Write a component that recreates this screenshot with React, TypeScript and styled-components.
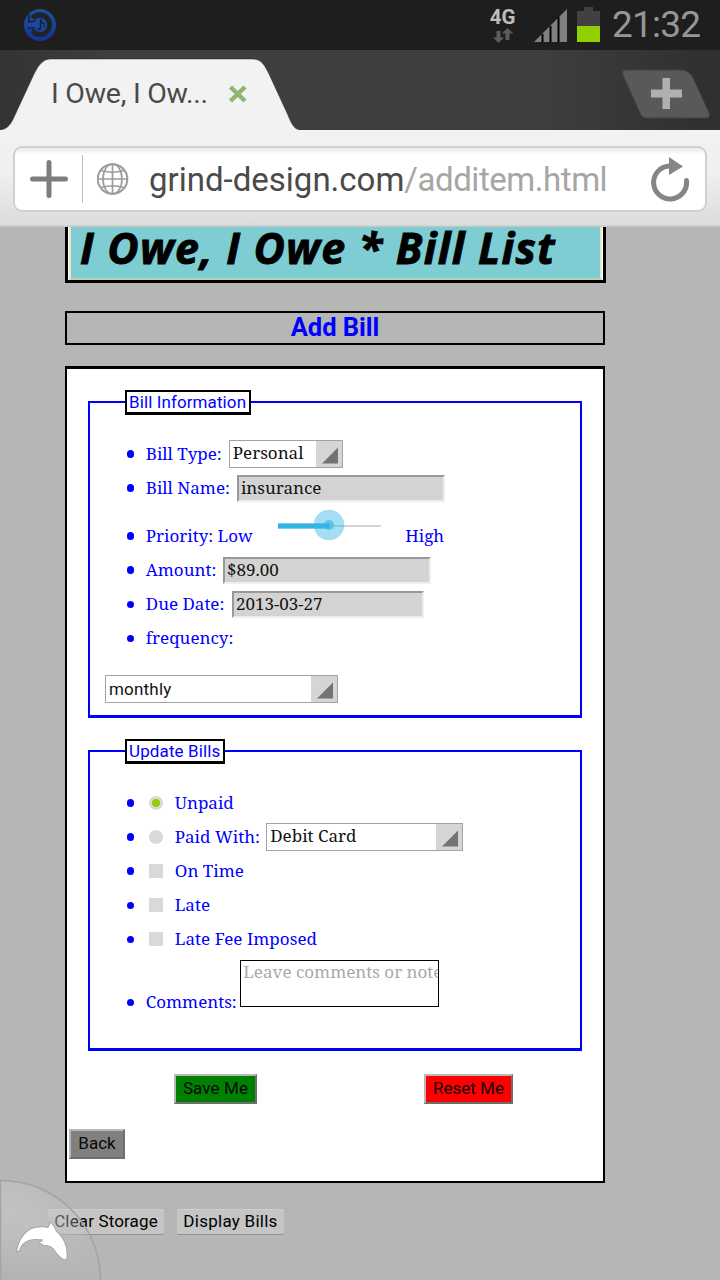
import React from 'react';
import styled, { createGlobalStyle } from 'styled-components';

const Global = createGlobalStyle`
  * { box-sizing: border-box; }
  body { margin: 0; background: #b6b6b4; }
`;

const sans = 'Roboto, "Liberation Sans", sans-serif';
const serif = '"Noto Serif", "DejaVu Serif Condensed", "DejaVu Serif", serif';

const Screen = styled.div`
  position: relative;
  width: 720px;
  height: 1280px;
  overflow: hidden;
  background: #b6b6b4;
  font-family: ${serif};
  font-size: 17px;
  color: #00f;
  white-space: nowrap;
`;

/* ---------- device status bar ---------- */

const StatusBar = styled.header`
  display: flex;
  height: 50px;
  padding: 0 20px 0 22px;
  background: #1e1e1e;
  font-family: ${sans};
`;

const StatusSpacer = styled.div`
  flex: 1;
`;

const Network = styled.div`
  display: flex;
  flex-direction: column;
  align-items: center;
  width: 28px;
  margin-right: 17px;
  padding-top: 7px;
  color: #bebebe;
  font-weight: 700;
  font-size: 20.5px;
  line-height: 21px;
`;

const Clock = styled.div`
  width: 88px;
  margin-left: 11.5px;
  color: #969696;
  font-size: 37px;
  line-height: 50px;
  letter-spacing: -0.8px;
`;

/* ---------- browser chrome ---------- */

const TabStrip = styled.div`
  display: flex;
  justify-content: space-between;
  height: 80px;
  background: linear-gradient(90deg, #333 0, #3e3e3e 110px, #3e3e3e 540px, #303030 700px);
`;

const Tab = styled.div`
  display: grid;
  width: 300px;
  height: 80px;
  > * { grid-area: 1 / 1; }
`;

const TabContent = styled.div`
  display: flex;
  align-items: center;
  padding: 7px 0 0 51px;
  gap: 18px;
  color: #4a4a4a;
  font: 28.5px/34px ${sans};
`;

const TabTitle = styled.span`
  width: 159px;
  letter-spacing: -0.25px;
`;

const NewTab = styled.svg`
  margin-top: 18px;
`;

const AddressArea = styled.div`
  height: 97px;
  padding: 16px 13px 0;
  background: linear-gradient(#f2f2f2 0, #efefef 45px, #dcdcdc 93px, #dcdcdc 95px, #bdbfbc 97px);
`;

const AddressBox = styled.div`
  display: flex;
  align-items: center;
  height: 66px;
  border: 2px solid #d0d0d0;
  border-radius: 9px;
  background: linear-gradient(#e9e9e9, #fff 7px);
  padding: 0 13px 0 15px;
`;

const Divider = styled.i`
  width: 1px;
  height: 48px;
  margin: 0 14px 0 14px;
  background: #b9c4b4;
`;

const Url = styled.div`
  flex: 1;
  margin: 2px 0 0 20px;
  color: #4a4a4a;
  font: 33px/40px ${sans};
`;

const Path = styled.span`
  color: #a6a6a6;
  letter-spacing: -0.45px;
`;

/* ---------- web page ---------- */

const Page = styled.main`
  display: flex;
  flex-direction: column;
  margin-left: 65px;
  width: 541px;
`;

const Banner = styled.h1`
  margin: 0;
  height: 56px;
  padding: 0 1px 0 1px;
  border: solid #000;
  border-width: 0 3px 3px;
  background: #fff;
`;

const BannerArt = styled.div`
  height: 53px;
  border: solid #ebe7c6;
  border-width: 0 2px 2px;
  border-bottom-color: #bcd0bb;
  background: #7dcdd2;
  padding-left: 9px;
  color: #000;
  font: italic 700 43px/41px "Open Sans", "Noto Sans", sans-serif;
  letter-spacing: 1.22px;
  -webkit-text-stroke: 0.9px #000;
`;

const Heading = styled.h2`
  width: 540px;
  height: 34px;
  margin: 28px 0 0;
  border: 2px solid #000;
  text-align: center;
  font: 700 25.5px/29px ${sans};
`;

const Form = styled.form`
  display: flex;
  flex-direction: column;
  width: 540px;
  height: 817px;
  margin: 21px 0 0;
  padding: 21px 21px 0;
  border: 2px solid #000;
  border-top-width: 3px;
  background: #fff;
`;

const Group = styled.fieldset<{ $h: number }>`
  height: ${p => p.$h}px;
  min-width: 0;
  margin: 0 0 21px;
  padding: 0 0 0 15px;
  border: 2px solid #00f;
  border-bottom-width: 3px;
`;

const Legend = styled.legend<{ $w: number; $track: number }>`
  width: ${p => p.$w}px;
  height: 24px;
  margin-left: 20px;
  padding-left: 2px;
  border: 2px solid #000;
  box-shadow: 0 1px 0 #000;
  font: 17px/20px ${sans};
  letter-spacing: ${p => p.$track}px;
`;

const List = styled.ul`
  margin: 22.4px 0 0;
  padding: 0 0 0 22px;
  list-style: none;
`;

const Item = styled.li<{ $h?: number }>`
  display: flex;
  align-items: flex-end;
  height: ${p => p.$h ?? 34.17}px;
  line-height: 34px;

  &::before {
    content: '';
    flex: none;
    width: 7.4px;
    height: 7.4px;
    margin: 0 11.4px 13px 0;
    border-radius: 50%;
    background: #00f;
  }
`;

const Label = styled.span<{ $w?: number; $track?: number }>`
  flex: none;
  height: 34px;
  width: ${p => (p.$w ? p.$w + 'px' : 'auto')};
  letter-spacing: ${p => p.$track ?? 0}px;
`;

const Select = styled.div<{ $w: number; $sans?: boolean }>`
  display: flex;
  flex: none;
  justify-content: space-between;
  width: ${p => p.$w}px;
  height: 28px;
  margin-bottom: 2.5px;
  padding-left: 3px;
  border: 1.5px solid #a3a3a3;
  background: #fff;
  color: #111;
  font: 17px/${p => (p.$sans ? '26px' : '24px')} ${p => (p.$sans ? sans : serif)};
  letter-spacing: ${p => (p.$sans ? 0.2 : 0)}px;
`;

const SelectArrow = styled.svg`
  flex: none;
  background: #d5d5d5;
`;

const Field = styled.div<{ $w: number }>`
  width: ${p => p.$w}px;
  height: 27px;
  margin-bottom: 3px;
  padding-left: 1.6px;
  border: 2px solid;
  border-color: #999 #eee #eee #999;
  background: #d3d3d3;
  color: #111;
  line-height: 21px;
`;

const Slider = styled.svg`
  margin: 0 20px 12px 20px;
`;

const Choice = styled.i<{ $round?: boolean; $on?: boolean }>`
  width: 14px;
  height: 14px;
  margin: 0 11.6px 10px 3.4px;
  border-radius: ${p => (p.$round ? '50%' : '0')};
  background: ${p => (p.$on ? 'radial-gradient(circle, #99cc00 3.7px, #d8d8d8 4.5px)' : '#d9d9d9')};
`;

const Comments = styled.div`
  width: 199px;
  height: 47px;
  margin-bottom: 12px;
  padding-left: 2px;
  border: 1px solid #000;
  overflow: hidden;
  color: #a9a9a9;
  line-height: 22px;
`;

const Actions = styled.div`
  display: flex;
  justify-content: space-between;
  padding: 2px 69px 0 86px;
`;

const Button = styled.button<{ $w: number; $bg: string; $track?: number }>`
  width: ${p => p.$w}px;
  height: 30px;
  padding: 0 0 2px;
  border: 2px solid;
  border-color: #b8b8b8 #6e6e6e #6e6e6e #b8b8b8;
  background: ${p => p.$bg};
  color: #080808;
  font: 17px/24px ${sans};
  letter-spacing: ${p => p.$track ?? 0}px;
  white-space: nowrap;
`;

const BackRow = styled.div`
  display: flex;
  margin: 25px 0 0 -19px;
`;

const Tools = styled.footer`
  display: flex;
  gap: 13px;
  margin: 26px 0 0 -17px;
`;

const ToolButton = styled.button<{ $w: number; $track: number }>`
  width: ${p => p.$w}px;
  height: 26px;
  padding: 0 0 2px;
  border: 0;
  border-top: 1px solid #cfcfcf;
  border-bottom: 1px solid #929292;
  border-radius: 2px;
  background: #c5c5c5;
  color: #000;
  font: 17px/22px ${sans};
  letter-spacing: ${p => p.$track}px;
  white-space: nowrap;
`;

const MonthlySlot = styled.div`
  margin-top: 19.6px;
`;

const Dolphin = styled.svg`
  position: absolute;
  left: 0;
  bottom: 0;
`;

const Dropdown = ({ w, value, sansText }: { w: number; value: string; sansText?: boolean }) => (
  <Select $w={w} $sans={sansText}>
    {value}
    <SelectArrow width="26" height="26" viewBox="0 0 26 26">
      <path d="M6 22.5L22 6.5V22.5Z" fill="#737373" />
    </SelectArrow>
  </Select>
);

export default function App() {
  return (
    <Screen>
      <Global />
      <StatusBar>
        <svg width="36" height="50" viewBox="0 0 36 50">
          <defs>
            <linearGradient id="ring" x1="0" y1="0" x2="0" y2="1">
              <stop offset="0" stopColor="#205098" />
              <stop offset="1" stopColor="#12349a" />
            </linearGradient>
          </defs>
          <circle cx="18" cy="25" r="16" fill="url(#ring)" />
          <path d="M9 17A11.500 11.500 0 1 1 9.500 32.500" fill="none" stroke="#1c2432" strokeWidth="1.5" />
          <path d="M11 18.500A9.500 9.500 0 1 1 11 31.500" fill="none" stroke="#202226" strokeWidth="4.500" />
          <path d="M6.500 14.500L7 22L14 21.500M6 28L13 27L10 31.500" fill="none" stroke="#1c2432" strokeWidth="1.800" />
          <circle cx="18.500" cy="25" r="6.500" fill="#1c479c" />
          <path d="M7 22.500H14V27H7Z" fill="#1c479c" />
          <path d="M18.500 29V19.500Q19.500 23 22 24Q22.500 26 21.500 27" fill="none" stroke="#181f30" strokeWidth="1.300" />
          <ellipse cx="17.300" cy="29" rx="1.800" ry="1.300" fill="#181f30" />
        </svg>
        <StatusSpacer />
        <Network>
          4G
          <svg width="22" height="16" viewBox="0 0 22 16">
            <path d="M4.500 3H8.500V9.500H12L6.500 15L1 9.500H4.500Z" fill="#5c5c5c" />
            <path d="M13.500 12H17.500V5.500H21.500L15.500 0L10 5.500H13.500Z" fill="#5c5c5c" />
          </svg>
        </Network>
        <svg width="34" height="50" viewBox="0 0 34 50">
          <path d="M0 42L33 9V42Z" fill="#808080" />
          <path d="M7.500 34H9.500V42H7.500ZM15.500 26H17.500V42H15.500ZM23.500 17H25.500V42H23.500Z" fill="#000" />
        </svg>
        <svg width="33" height="50" viewBox="0 0 33 50">
          <path d="M9 11H16V7H25V11H32V26H9Z" fill="#414141" />
          <path d="M9 26H32V42H9Z" fill="#91d000" />
        </svg>
        <Clock>21:32</Clock>
      </StatusBar>

      <TabStrip>
        <Tab>
          <svg width="300" height="80" viewBox="0 0 300 80">
            <path
              d="M0 80C8 79 11 74 15 65L34 24Q41 9 50 9H252C261 9 264 14 269 24L287 63C291 72 293 79 300 80"
              fill="#f2f2f2"
              stroke="#262626"
              strokeOpacity=".5"
              strokeWidth="1"
            />
          </svg>
          <TabContent>
            <TabTitle>I Owe, I Ow...</TabTitle>
            <svg width="20" height="20" viewBox="0 0 20 20">
              <path d="M2.500 3L17 17M17 3L2.500 17" stroke="#8fb573" strokeWidth="4.500" />
            </svg>
          </TabContent>
        </Tab>
        <NewTab width="100" height="52" viewBox="0 0 100 52">
          <path
            d="M6 2H60Q69 2 73 10L89 45Q91 50 86 50H27Q22 50 20 45L3 7Q1 2 6 2Z"
            fill="#595959"
            stroke="#42453e"
          />
          <path d="M42.500 10H50V21.500H62V29.500H50V41H42.500V29.500H31V21.500H42.500Z" fill="#b0b0b0" />
        </NewTab>
      </TabStrip>

      <AddressArea>
        <AddressBox>
          <svg width="38" height="38" viewBox="0 0 38 38">
            <path d="M19 2.500V35.500M2.500 19H35.500" stroke="#7d7d7d" strokeWidth="5" strokeLinecap="round" />
          </svg>
          <Divider />
          <svg width="32" height="32" viewBox="0 0 32 32" fill="none" stroke="#9c9c9c" strokeWidth="1.7">
            <circle cx="15.500" cy="16" r="14.800" strokeWidth="2" />
            <ellipse cx="15.500" cy="16" rx="9.500" ry="15" />
            <path d="M15.500 1V31M1 16H30M4 7.500Q15.500 11 27 7.500M4 24.500Q15.500 21 27 24.500" />
          </svg>
          <Url>
            grind-design.com<Path>/additem.html</Path>
          </Url>
          <svg width="42" height="46" viewBox="0 0 42 46">
            <path d="M36.500 24.500A16.500 16.500 0 1 1 20 10" fill="none" stroke="#858585" strokeWidth="5" strokeLinecap="round" />
            <path d="M19 1L33 10.500L19 19Z" fill="#858585" />
          </svg>
        </AddressBox>
      </AddressArea>

      <Page>
        <Banner>
          <BannerArt>I Owe, I Owe * Bill List</BannerArt>
        </Banner>
        <Heading>Add Bill</Heading>
        <Form>
          <Group $h={328}>
            <Legend $w={126} $track={0.1}>Bill Information</Legend>
            <List>
              <Item>
                <Label $w={83}>Bill Type:</Label>
                <Dropdown w={114.6} value="Personal" />
              </Item>
              <Item>
                <Label $w={91.5}>Bill Name:</Label>
                <Field $w={208}>insurance</Field>
              </Item>
              <Item $h={48}>
                <Label $w={112.5}>Priority: Low</Label>
                <Slider width="107" height="32" viewBox="0 0 107 32">
                  <path d="M52 17H103" stroke="#d6d6d6" strokeWidth="2" />
                  <path d="M0 17H51.500" stroke="#7ccdee" strokeWidth="6" />
                  <path d="M0 17H51.500" stroke="#33b5e5" strokeWidth="4" />
                  <circle cx="51" cy="16" r="15.300" fill="#33b5e5" fillOpacity=".45" />
                  <circle cx="51" cy="16" r="5" fill="#33b5e5" fillOpacity=".6" />
                </Slider>
                <Label>High</Label>
              </Item>
              <Item>
                <Label $w={77.5}>Amount:</Label>
                <Field $w={208}>$89.00</Field>
              </Item>
              <Item>
                <Label $w={86.5}>Due Date:</Label>
                <Field $w={192}>2013-03-27</Field>
              </Item>
              <Item>
                <Label>frequency:</Label>
              </Item>
            </List>
            <MonthlySlot>
              <Dropdown w={233} value="monthly" sansText />
            </MonthlySlot>
          </Group>

          <Group $h={312}>
            <Legend $w={100} $track={0.12}>Update Bills</Legend>
            <List>
              <Item>
                <Choice $round $on />
                <Label>Unpaid</Label>
              </Item>
              <Item>
                <Choice $round />
                <Label $w={91.5}>Paid With:</Label>
                <Dropdown w={197} value="Debit Card" />
              </Item>
              <Item>
                <Choice />
                <Label>On Time</Label>
              </Item>
              <Item>
                <Choice />
                <Label>Late</Label>
              </Item>
              <Item>
                <Choice />
                <Label $track={0.06}>Late Fee Imposed</Label>
              </Item>
              <Item $h={63}>
                <Label $w={94.5}>Comments:</Label>
                <Comments>Leave comments or notes here</Comments>
              </Item>
            </List>
          </Group>

          <Actions>
            <Button type="button" $w={83} $bg="#008000" $track={0.1}>Save Me</Button>
            <Button type="button" $w={89} $bg="#f00">Reset Me</Button>
          </Actions>
          <BackRow>
            <Button type="button" $w={56} $bg="#808080">Back</Button>
          </BackRow>
        </Form>
        <Tools>
          <ToolButton $w={116} $track={0.14}>Clear Storage</ToolButton>
          <ToolButton $w={107} $track={0.26}>Display Bills</ToolButton>
        </Tools>
      </Page>

      <Dolphin width="104" height="104" viewBox="0 0 104 104">
        <defs>
          <linearGradient id="fan" x1="0" y1="0" x2="0" y2="1">
            <stop offset="0" stopColor="#d0d0d0" />
            <stop offset="1" stopColor="#b2b2b2" />
          </linearGradient>
          <radialGradient id="fade" gradientUnits="userSpaceOnUse" cx="0" cy="104" r="100">
            <stop offset="0.6" stopColor="#fff" stopOpacity=".8" />
            <stop offset="1" stopColor="#fff" stopOpacity=".25" />
          </radialGradient>
          <mask id="veil">
            <rect width="104" height="104" fill="url(#fade)" />
          </mask>
        </defs>
        <path d="M1 5A99.500 99.500 0 0 1 100.500 104H1Z" fill="url(#fan)" mask="url(#veil)" />
        <path d="M0.500 104V4.500A99.500 99.500 0 0 1 100.500 104" fill="none" stroke="#a4a4a4" strokeWidth="1.600" />
        <path
          d="M17 74C20 58 30 50 39 50.500C43 50 46 50.500 48 51C50 49 50 47 50 45.500C53 48 55 51 56 54.500C63 60 68 70 66.500 82C62 83 58 78 54 72C51 69 48 68 46 68C42 68 41 66 39 65.500C41 65 43 64 43 62.500C35 61 26 62 21 69C20 71 19 75 17 74Z"
          transform="translate(0 1)"
          fill="#fff"
          stroke="#989898"
          strokeWidth="1.500"
          paintOrder="stroke"
        />
      </Dolphin>
    </Screen>
  );
}
